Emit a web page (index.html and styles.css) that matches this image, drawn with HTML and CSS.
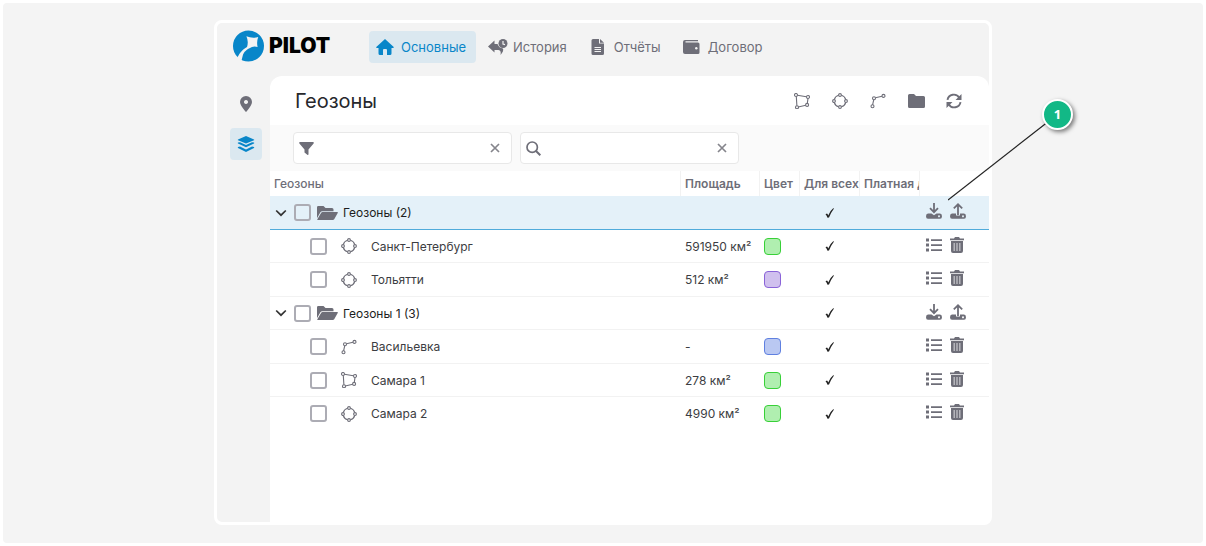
FILE: index.html
```html
<!DOCTYPE html>
<html lang="ru">
<head>
    <meta charset="UTF-8">
    <title>Геозоны</title>
    <meta name="viewport" content="width=device-width, initial-scale=1.0">
    <link rel="stylesheet" href="styles.css">
</head>
<body>
    <svg class="sprite" aria-hidden="true">
        <symbol id="i-polygon" viewBox="0 0 16 16">
            <g fill="none" stroke="currentColor" stroke-width="1.1">
                <path d="M3.4 2.2L12.4 3.7M14 5.4L13.3 10.4M11.8 12.2L4.2 14M2.3 3.4L2.9 12.8"/>
                <circle cx="2" cy="2" r="1.5"/><circle cx="14" cy="4" r="1.5"/>
                <circle cx="13.1" cy="11.9" r="1.5"/><circle cx="3" cy="14.3" r="1.5"/>
            </g>
        </symbol>
        <symbol id="i-circle" viewBox="0 0 16 16">
            <g fill="none" stroke="currentColor" stroke-width="1.1">
                <path d="M9.4 2.3Q12.8 3.2 13.7 6.5M13.7 9.5Q12.8 12.8 9.4 13.7M6.6 13.7Q3.2 12.8 2.3 9.5M2.3 6.5Q3.2 3.2 6.6 2.3"/>
                <circle cx="8" cy="2" r="1.4"/><circle cx="14" cy="8" r="1.4"/>
                <circle cx="8" cy="14" r="1.4"/><circle cx="2" cy="8" r="1.4"/>
            </g>
        </symbol>
        <symbol id="i-route" viewBox="0 0 16 16">
            <g fill="none" stroke="currentColor" stroke-width="1.1">
                <path d="M2.6 11.8L3.7 6.8M5.5 4.8L12 3.2"/>
                <circle cx="2.5" cy="13.2" r="1.5"/><circle cx="4" cy="5.2" r="1.5"/><circle cx="13.5" cy="2.9" r="1.5"/>
            </g>
        </symbol>
        <symbol id="i-folder" viewBox="0 0 17 14">
            <path fill="currentColor" d="M1.5 0H6l2 2h7.500Q17 2 17 3.500V12.500Q17 14 15.500 14H1.500Q0 14 0 12.500V1.500Q0 0 1.500 0z"/>
        </symbol>
        <symbol id="i-open" viewBox="0 0 21 14">
            <path fill="currentColor" d="M1.300 0H6.500L8.500 2H15Q16.500 2 16.500 3.500V5.200H5.300Q4 5.200 3.400 6.200L0 12.300V1.300Q0 0 1.300 0zM5.500 5.900H20.300Q21.200 5.900 20.700 7L17.200 13.200Q16.700 14 15.800 14H.8Q0 14 .4 13.200L4.200 6.700Q4.700 5.900 5.500 5.900z"/>
        </symbol>
        <symbol id="i-chevron" viewBox="0 0 12 8">
            <path fill="none" stroke="currentColor" stroke-width="1.700" d="M1.200 1.500L6 6.200L10.800 1.500"/>
        </symbol>
        <symbol id="i-close" viewBox="0 0 10 10">
            <path fill="none" stroke="currentColor" stroke-width="1.700" d="M1 1L9 9M9 1L1 9"/>
        </symbol>
        <symbol id="i-check" viewBox="0 0 10 10">
            <path fill="currentColor" d="M.5 6.300L2 5.400Q2.800 6 3.200 7.400Q5.300 2.500 8.200 .3L9 .6Q6.200 4.300 4 9.500L2.500 9.800Q1.800 7.400 .5 6.300z"/>
        </symbol>
        <symbol id="i-download" viewBox="0 0 16 16">
            <path fill="none" stroke="currentColor" stroke-width="1.800" d="M8 0V9M4 5.200L8 9.200L12 5.200"/>
            <path fill="currentColor" fill-rule="evenodd" d="M2 10.500H5.500L8 12.300L10.500 10.500H14Q16 10.500 16 13.200Q16 15.800 14 15.800H2Q0 15.800 0 13.200Q0 10.500 2 10.500zM13 12.300a1 1 0 1 0 .01 0z"/>
        </symbol>
        <symbol id="i-upload" viewBox="0 0 16 16">
            <path fill="none" stroke="currentColor" stroke-width="1.800" d="M8 12V1.500M3.800 5.300L8 1.300L12.200 5.300"/>
            <path fill="currentColor" fill-rule="evenodd" d="M2 10.500H6V12.500H10V10.500H14Q16 10.500 16 13.200Q16 15.800 14 15.800H2Q0 15.800 0 13.200Q0 10.500 2 10.500zM13 12.300a1 1 0 1 0 .01 0z"/>
        </symbol>
        <symbol id="i-list" viewBox="0 0 16 16">
            <path fill="currentColor" d="M0 1.500h3v3H0zM0 6.500h3v3H0zM0 11.500h3v3H0zM5 2.200h11v1.700H5zM5 7.200h11v1.700H5zM5 12.200h11v1.700H5z"/>
        </symbol>
        <symbol id="i-trash" viewBox="0 0 16 16">
            <path fill="currentColor" d="M0 1.500H4L5 0H9L10 1.500H14V3.200H0zM1 4H13V14Q13 16 11 16H3Q1 16 1 14z"/>
            <path fill="none" stroke="#c2c2c7" stroke-width="1.300" d="M4.200 6V14M7 6V14M9.800 6V14"/>
        </symbol>
    </svg>

    <main class="stage">
        <div class="window">
            <header class="topbar">
                <a class="logo" href="#">
                    <svg width="32" height="32" viewBox="0 0 32 32" aria-hidden="true">
                        <circle cx="15.500" cy="16" r="15.500" fill="#0886c9"/>
                        <path fill="#f3f3f3" d="M13.400 6.200Q19 8.600 25.200 7Q23.400 12 24.600 17Q20 15.800 16.500 18.200C12 20.500 10.500 23 9.800 25.500Q9 28.500 8.300 31.500L4 28.500C5.500 25 8.500 20 14 17Q15.800 11.500 13.400 6.200z"/>
                    </svg>
                    <span>PILOT</span>
                </a>
                <nav class="nav">
                    <a class="nav-item active" href="#">
                        <svg width="18" height="16" viewBox="0 0 18 16"><path fill="currentColor" d="M9 0L18 8.300Q17.500 9.300 16 9H15.500V14.500Q15.500 16 14 16H11V11Q11 10 10 10H8Q7 10 7 11V16H4Q2.500 16 2.500 14.500V9H1.500Q.3 9.200 0 8.300z"/></svg>
                        Основные
                    </a>
                    <a class="nav-item" href="#">
                        <svg width="18" height="16" viewBox="0 0 18 16" overflow="visible"><path fill="currentColor" d="M0 7.500L6.500 1.500V5H9.500Q11 9 15 9.500Q16 12 12.500 16Q13.500 11.500 10.500 11H6.500V13.500z"/><circle cx="15" cy="4.500" r="4.500" fill="currentColor"/><path fill="none" stroke="#f3f3f3" stroke-width="1.200" d="M15 2V5L17 5.600"/></svg>
                        История
                    </a>
                    <a class="nav-item" href="#">
                        <svg width="18" height="16" viewBox="0 0 18 16"><path fill="currentColor" d="M4 0H10V4.500H15V14.500Q15 16 13.500 16H4Q2.500 16 2.500 14.500V1.500Q2.500 0 4 0zM11 0L15 3.700H11z"/><path stroke="#f3f3f3" d="M5.500 8.500H12M5.500 10.500H12M5.500 12.500H12"/></svg>
                        Отчёты
                    </a>
                    <a class="nav-item" href="#">
                        <svg width="18" height="16" viewBox="0 0 18 16"><path fill="currentColor" d="M2 1H15V2.200H2.500V3.500H15Q16.500 3.500 16.500 5V13.500Q16.500 15 15 15H2Q0 15 0 13V3Q0 1 2 1z"/><circle cx="13.300" cy="9.300" r="1.200" fill="#f3f3f3"/></svg>
                        Договор
                    </a>
                </nav>
            </header>

            <div class="body">
                <aside class="sidebar">
                    <button class="side-btn" type="button" aria-label="Объекты">
                        <svg width="12" height="16" viewBox="0 0 12 16"><path fill="currentColor" fill-rule="evenodd" d="M6 0a6 6 0 0 1 6 6Q12 9 6.600 15.500Q6 16.200 5.400 15.500Q0 9 0 6a6 6 0 0 1 6-6zM6 4a2 2 0 1 0 .01 0z"/></svg>
                    </button>
                    <button class="side-btn active" type="button" aria-label="Геозоны">
                        <svg width="18" height="16" viewBox="0 0 18 16"><path fill="currentColor" d="M9 0L17 3.400Q17.500 3.800 17 4.200L9 7.500L1 4.200Q.5 3.800 1 3.400zM1 6.500L3 6.300L9 9L15 6.300L17 6.500Q17.500 7 17 7.500L9 11.300L1 7.500Q.5 7 1 6.500zM1 11L3 10.600L9 13.400L15 10.600L17 11Q17.500 11.500 17 12L9 16L1 12Q.5 11.500 1 11z"/></svg>
                    </button>
                </aside>

                <section class="panel">
                    <div class="panel-head">
                        <h1>Геозоны</h1>
                        <div class="tools">
                            <button type="button" aria-label="Полигон"><svg width="16" height="16"><use href="#i-polygon"/></svg></button>
                            <button type="button" aria-label="Окружность"><svg width="16" height="16"><use href="#i-circle"/></svg></button>
                            <button type="button" aria-label="Маршрут"><svg width="16" height="16"><use href="#i-route"/></svg></button>
                            <button type="button" aria-label="Папка"><svg width="17" height="14"><use href="#i-folder"/></svg></button>
                            <button type="button" aria-label="Обновить">
                                <svg width="16" height="16" viewBox="0 0 16 16"><path fill="none" stroke="currentColor" stroke-width="1.900" d="M1.500 6.800A6.300 6 0 0 1 13.300 4.800M14.500 9.200A6.300 6 0 0 1 2.700 11.200"/><path fill="currentColor" d="M15.500 1V7H9.500zM.5 15V9H6.500z"/></svg>
                            </button>
                        </div>
                    </div>

                    <div class="filters">
                        <div class="field">
                            <svg width="15" height="13" viewBox="0 0 15 13"><path fill="currentColor" d="M.8 0H14.200Q15.300 .6 14.600 1.500L9.500 7.500V12.300Q9.300 13.300 8.300 12.700L5.500 10.500V7.500L.4 1.500Q-.3 .6 .8 0z"/></svg>
                            <input type="text" aria-label="Фильтр">
                            <button type="button" aria-label="Очистить фильтр"><svg width="10" height="10"><use href="#i-close"/></svg></button>
                        </div>
                        <div class="field">
                            <svg width="15" height="15" viewBox="0 0 15 15"><circle cx="6.200" cy="6.200" r="5.200" fill="none" stroke="currentColor" stroke-width="1.700"/><path stroke="currentColor" stroke-width="2" d="M10 10L14.300 14.300"/></svg>
                            <input type="text" aria-label="Поиск">
                            <button type="button" aria-label="Очистить поиск"><svg width="10" height="10"><use href="#i-close"/></svg></button>
                        </div>
                    </div>

                    <table class="zones">
                        <colgroup>
                            <col>
                            <col class="col-area">
                            <col class="col-color">
                            <col class="col-all">
                            <col class="col-paid">
                            <col class="col-actions">
                        </colgroup>
                        <thead>
                            <tr><th>Геозоны</th><th>Площадь</th><th>Цвет</th><th>Для всех</th><th>Платная дорога</th><th></th></tr>
                        </thead>
                        <tbody>
                            <tr class="group selected">
                                <td><div class="tree"><button class="toggle" type="button" aria-label="Свернуть"><svg width="12" height="8"><use href="#i-chevron"/></svg></button><input type="checkbox" id="g1"><label for="g1"><svg width="21" height="14"><use href="#i-open"/></svg>Геозоны (2)</label></div></td>
                                <td></td><td></td><td class="check"><svg width="10" height="10"><use href="#i-check"/></svg></td><td></td>
                                <td><div class="actions"><button type="button" aria-label="Импорт"><svg width="16" height="16"><use href="#i-download"/></svg></button><button type="button" aria-label="Экспорт"><svg width="16" height="16"><use href="#i-upload"/></svg></button></div></td>
                            </tr>
                            <tr>
                                <td><div class="tree"><input type="checkbox" id="z1"><label for="z1"><svg width="16" height="16"><use href="#i-circle"/></svg>Санкт-Петербург</label></div></td>
                                <td>591950 км²</td><td><span class="swatch green"></span></td><td class="check"><svg width="10" height="10"><use href="#i-check"/></svg></td><td></td>
                                <td><div class="actions"><button type="button" aria-label="Список"><svg width="16" height="16"><use href="#i-list"/></svg></button><button type="button" aria-label="Удалить"><svg width="16" height="16"><use href="#i-trash"/></svg></button></div></td>
                            </tr>
                            <tr>
                                <td><div class="tree"><input type="checkbox" id="z2"><label for="z2"><svg width="16" height="16"><use href="#i-circle"/></svg>Тольятти</label></div></td>
                                <td>512 км²</td><td><span class="swatch violet"></span></td><td class="check"><svg width="10" height="10"><use href="#i-check"/></svg></td><td></td>
                                <td><div class="actions"><button type="button" aria-label="Список"><svg width="16" height="16"><use href="#i-list"/></svg></button><button type="button" aria-label="Удалить"><svg width="16" height="16"><use href="#i-trash"/></svg></button></div></td>
                            </tr>
                            <tr class="group">
                                <td><div class="tree"><button class="toggle" type="button" aria-label="Свернуть"><svg width="12" height="8"><use href="#i-chevron"/></svg></button><input type="checkbox" id="g2"><label for="g2"><svg width="21" height="14"><use href="#i-open"/></svg>Геозоны 1 (3)</label></div></td>
                                <td></td><td></td><td class="check"><svg width="10" height="10"><use href="#i-check"/></svg></td><td></td>
                                <td><div class="actions"><button type="button" aria-label="Импорт"><svg width="16" height="16"><use href="#i-download"/></svg></button><button type="button" aria-label="Экспорт"><svg width="16" height="16"><use href="#i-upload"/></svg></button></div></td>
                            </tr>
                            <tr>
                                <td><div class="tree"><input type="checkbox" id="z3"><label for="z3"><svg width="16" height="16"><use href="#i-route"/></svg>Васильевка</label></div></td>
                                <td>-</td><td><span class="swatch blue"></span></td><td class="check"><svg width="10" height="10"><use href="#i-check"/></svg></td><td></td>
                                <td><div class="actions"><button type="button" aria-label="Список"><svg width="16" height="16"><use href="#i-list"/></svg></button><button type="button" aria-label="Удалить"><svg width="16" height="16"><use href="#i-trash"/></svg></button></div></td>
                            </tr>
                            <tr>
                                <td><div class="tree"><input type="checkbox" id="z4"><label for="z4"><svg width="16" height="16"><use href="#i-polygon"/></svg>Самара 1</label></div></td>
                                <td>278 км²</td><td><span class="swatch green"></span></td><td class="check"><svg width="10" height="10"><use href="#i-check"/></svg></td><td></td>
                                <td><div class="actions"><button type="button" aria-label="Список"><svg width="16" height="16"><use href="#i-list"/></svg></button><button type="button" aria-label="Удалить"><svg width="16" height="16"><use href="#i-trash"/></svg></button></div></td>
                            </tr>
                            <tr>
                                <td><div class="tree"><input type="checkbox" id="z5"><label for="z5"><svg width="16" height="16"><use href="#i-circle"/></svg>Самара 2</label></div></td>
                                <td>4990 км²</td><td><span class="swatch green"></span></td><td class="check"><svg width="10" height="10"><use href="#i-check"/></svg></td><td></td>
                                <td><div class="actions"><button type="button" aria-label="Список"><svg width="16" height="16"><use href="#i-list"/></svg></button><button type="button" aria-label="Удалить"><svg width="16" height="16"><use href="#i-trash"/></svg></button></div></td>
                            </tr>
                        </tbody>
                    </table>
                </section>
            </div>

            <!-- numbered pointer to the import button -->
            <div class="callout">
                <svg width="125" height="102" viewBox="0 0 125 102"><path stroke="#222" stroke-width="1.200" d="M0 101L110 15"/></svg>
                <span class="callout-num">1</span>
            </div>
        </div>
    </main>
</body>
</html>
```
FILE: styles.css
```css
* {
    box-sizing: border-box;
}
body {
    margin: 0;
    padding: 3px;
    background: #fff;
    font-family: Inter, "Liberation Sans", sans-serif;
    font-size: 12px;
    color: #3c3d42;
}
button {
    display: flex;
    align-items: center;
    justify-content: center;
    padding: 0;
    border: none;
    background: none;
    color: #6e6e78;
    cursor: pointer;
}
svg {
    display: block;
    flex: none;
}
.sprite {
    display: none;
}
.stage {
    display: flex;
    justify-content: center;
    min-height: calc(100vh - 6px);
    padding: 17px 16px 18px;
    background: #f4f4f4;
    border-radius: 4px;
}
.window {
    position: relative;
    display: flex;
    flex-direction: column;
    width: 100%;
    max-width: 778px;
    border: 3px solid #fff;
    border-radius: 8px;
    background: #f3f3f3;
}

/* top bar */
.topbar {
    display: flex;
    align-items: center;
    height: 53px;
    padding: 0 16px;
}
.logo {
    display: flex;
    align-items: center;
    gap: 4px;
    width: 136px;
    padding-bottom: 7px;
    color: #000;
    font-size: 21px;
    font-weight: 900;
    line-height: 32px;
    text-decoration: none;
}
.nav {
    display: flex;
    gap: 5px;
    padding-bottom: 5px;
}
.nav-item {
    display: flex;
    align-items: center;
    gap: 7px;
    height: 32px;
    padding: 0 10px 0 7px;
    border-radius: 4px;
    color: #6e6e78;
    font-size: 13px;
    text-decoration: none;
}
.nav-item.active,
.side-btn.active {
    background: #dbe8f0;
    color: #0886c9;
}

/* side bar and panel */
.body {
    display: flex;
    flex: 1;
}
.sidebar {
    display: flex;
    flex-direction: column;
    gap: 8px;
    width: 53px;
    padding: 12px 8px 12px 13px;
}
.side-btn {
    width: 32px;
    height: 32px;
    border-radius: 4px;
}
.panel {
    flex: 1;
    min-width: 0;
    background: #fff;
    border-radius: 12px 12px 4px 0;
}
.panel-head {
    display: flex;
    align-items: center;
    justify-content: space-between;
    height: 49px;
    padding: 0 16px 0 25px;
}
h1 {
    margin: 0;
    font-size: 20px;
    font-weight: 400;
    color: #27282c;
}
.tools {
    display: flex;
}
.tools button {
    width: 38px;
    height: 32px;
}
.filters {
    display: flex;
    gap: 8px;
    padding: 7px 23px;
    background: #fafafa;
}
.field {
    display: flex;
    align-items: center;
    width: 219px;
    height: 32px;
    padding: 0 6px 0 5px;
    border: 1px solid #e8e8e8;
    border-radius: 4px;
    background: #fff;
    color: #6e6e78;
}
.field input {
    flex: 1;
    min-width: 0;
    padding: 0 6px;
    border: none;
    outline: none;
    background: none;
    font: inherit;
}
.field button {
    width: 20px;
    height: 20px;
    color: #85858c;
}

/* zones table */
.zones {
    width: 100%;
    table-layout: fixed;
    border-collapse: separate;
    border-spacing: 0;
}
.col-area {
    width: 79px;
}
.col-color {
    width: 40px;
}
.col-all,
.col-paid {
    width: 60px;
}
.col-actions {
    width: 70px;
}
.zones th {
    height: 25px;
    padding: 0 0 0 4px;
    border-left: 1px solid #f2f2f2;
    overflow: hidden;
    color: #6e6e78;
    font-weight: 600;
    font-size: 12px;
    text-align: left;
    white-space: nowrap;
}
.zones th:first-child {
    border-left: none;
    font-weight: 500;
}
.zones td {
    height: 34px;
    padding: 0 0 0 5px;
    border-bottom: 1px solid #f2f2f2;
    white-space: nowrap;
}
.zones tbody tr:nth-child(even) td {
    height: 33px;
}
.zones tbody tr:last-child td {
    border-bottom-color: transparent;
}
.zones td:first-child {
    padding-left: 40px;
}
.zones .group td:first-child {
    padding-left: 5px;
    color: #1c1d20;
}
.zones .selected td {
    background: #e4f1f9;
    border-bottom-color: #4fabdb;
}
.zones .check {
    padding: 0 0 0 2px;
    color: #222;
}
.check svg {
    margin: 0 auto;
}
.tree,
.tree label {
    display: flex;
    align-items: center;
    gap: 14px;
}
.tree svg {
    color: #6e6e78;
}
.group .tree {
    gap: 6px;
}
.group label {
    gap: 5px;
}
.toggle {
    width: 12px;
    margin-right: 1px;
}
.toggle svg {
    color: #333;
}
.tree input {
    appearance: none;
    width: 17px;
    height: 17px;
    margin: 0;
    border: 2px solid #acacb4;
    border-radius: 3px;
}
.swatch {
    display: block;
    width: 17px;
    height: 17px;
    border: 1px solid;
    border-radius: 4px;
}
.green {
    background: #b0efb0;
    border-color: #38d038;
}
.violet {
    background: #d0c0ee;
    border-color: #8a63d8;
}
.blue {
    background: #bac8f2;
    border-color: #5f80e0;
}
.actions {
    display: flex;
    gap: 8px;
    padding: 0 0 3px 2px;
}

/* callout lies over the window and the stage */
.callout {
    position: absolute;
    top: 76px;
    left: 731px;
}
.callout-num {
    position: absolute;
    top: 0;
    right: 0;
    width: 31px;
    height: 31px;
    border: 2px solid #fff;
    border-radius: 50%;
    background: #12b886;
    box-shadow: 2px 2px 4px rgba(0, 0, 0, 0.5);
    color: #fff;
    font-family: "Open Sans", sans-serif;
    font-size: 13px;
    font-weight: 700;
    line-height: 27px;
    text-align: center;
}
```
